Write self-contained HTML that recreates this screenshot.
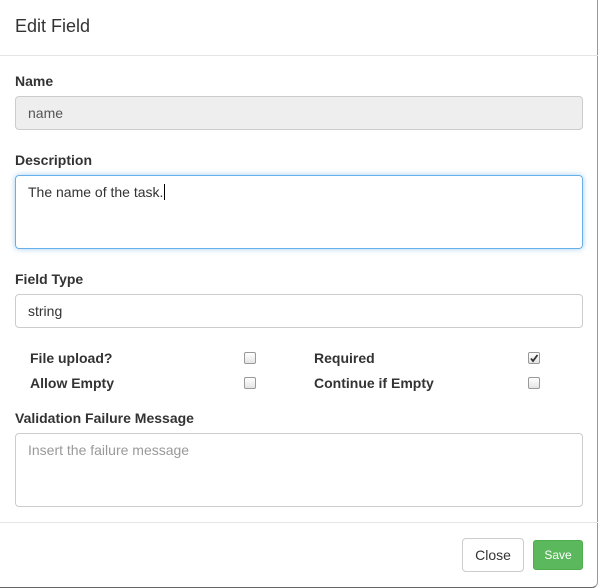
<!DOCTYPE html>
<html><head><style>
*{box-sizing:border-box;margin:0;padding:0}
body{width:599px;height:588px;background:#fff;font-family:"Liberation Sans",sans-serif;font-size:14px;color:#333;position:relative;overflow:hidden}
.m{position:absolute;left:0;top:0;width:598px;height:588px;border-right:1px solid #999;border-bottom:1px solid #666;border-radius:0 0 6px 0}
.a{position:absolute}
.lbl{position:absolute;left:15px;font-weight:bold;font-size:14px}
.in{position:absolute;left:15px;width:568px;border:1px solid #ccc;border-radius:4px;padding:0 12px;display:flex;align-items:center;font-size:14px}
.ta{align-items:flex-start;padding-top:8px}
.cb{position:absolute;width:12px;height:12px;border:1px solid #999;border-radius:2px;background:linear-gradient(#fff,#e4e4e4)}
.hr{position:absolute;left:0;width:598px;height:1px;background:#e5e5e5}
</style></head><body>
<div class="m"></div>
<div class="a" style="left:15px;top:16px;font-size:18px">Edit Field</div>
<div class="hr" style="top:55px"></div>
<div class="lbl" style="top:73px">Name</div>
<div class="in" style="top:96px;height:34px;background:#eee;color:#555">name</div>
<div class="lbl" style="top:152px">Description</div>
<div class="in ta" style="top:175px;height:74px;border-color:#66afe9;box-shadow:0 0 6px rgba(102,175,233,.6)">The name of the task.<span style="border-left:1px solid #000;height:16px;margin-left:1px"></span></div>
<div class="lbl" style="top:271px">Field Type</div>
<div class="in" style="top:294px;height:34px">string</div>
<div class="lbl" style="left:30px;top:350px">File upload?</div>
<div class="lbl" style="left:30px;top:375px">Allow Empty</div>
<div class="lbl" style="left:314px;top:350px">Required</div>
<div class="lbl" style="left:314px;top:375px">Continue if Empty</div>
<div class="cb" style="left:244px;top:352px"></div>
<div class="cb" style="left:244px;top:377px"></div>
<div class="cb" style="left:528px;top:352px"><svg width="10" height="10" style="position:absolute;left:0;top:0"><path d="M2 5.5L4 8L8.5 2" stroke="#333" stroke-width="1.8" fill="none"/></svg></div>
<div class="cb" style="left:528px;top:377px"></div>
<div class="lbl" style="top:410px">Validation Failure Message</div>
<div class="in ta" style="top:433px;height:74px;color:#999">Insert the failure message</div>
<div class="hr" style="top:522px"></div>
<div class="a" style="left:462px;top:538px;width:62px;height:34px;border:1px solid #ccc;border-radius:4px;display:flex;align-items:center;justify-content:center">Close</div>
<div class="a" style="left:533px;top:540px;width:50px;height:30px;background:#5cb85c;border:1px solid #4cae4c;border-radius:3px;color:#fff;font-size:12px;display:flex;align-items:center;justify-content:center">Save</div>
</body></html>
